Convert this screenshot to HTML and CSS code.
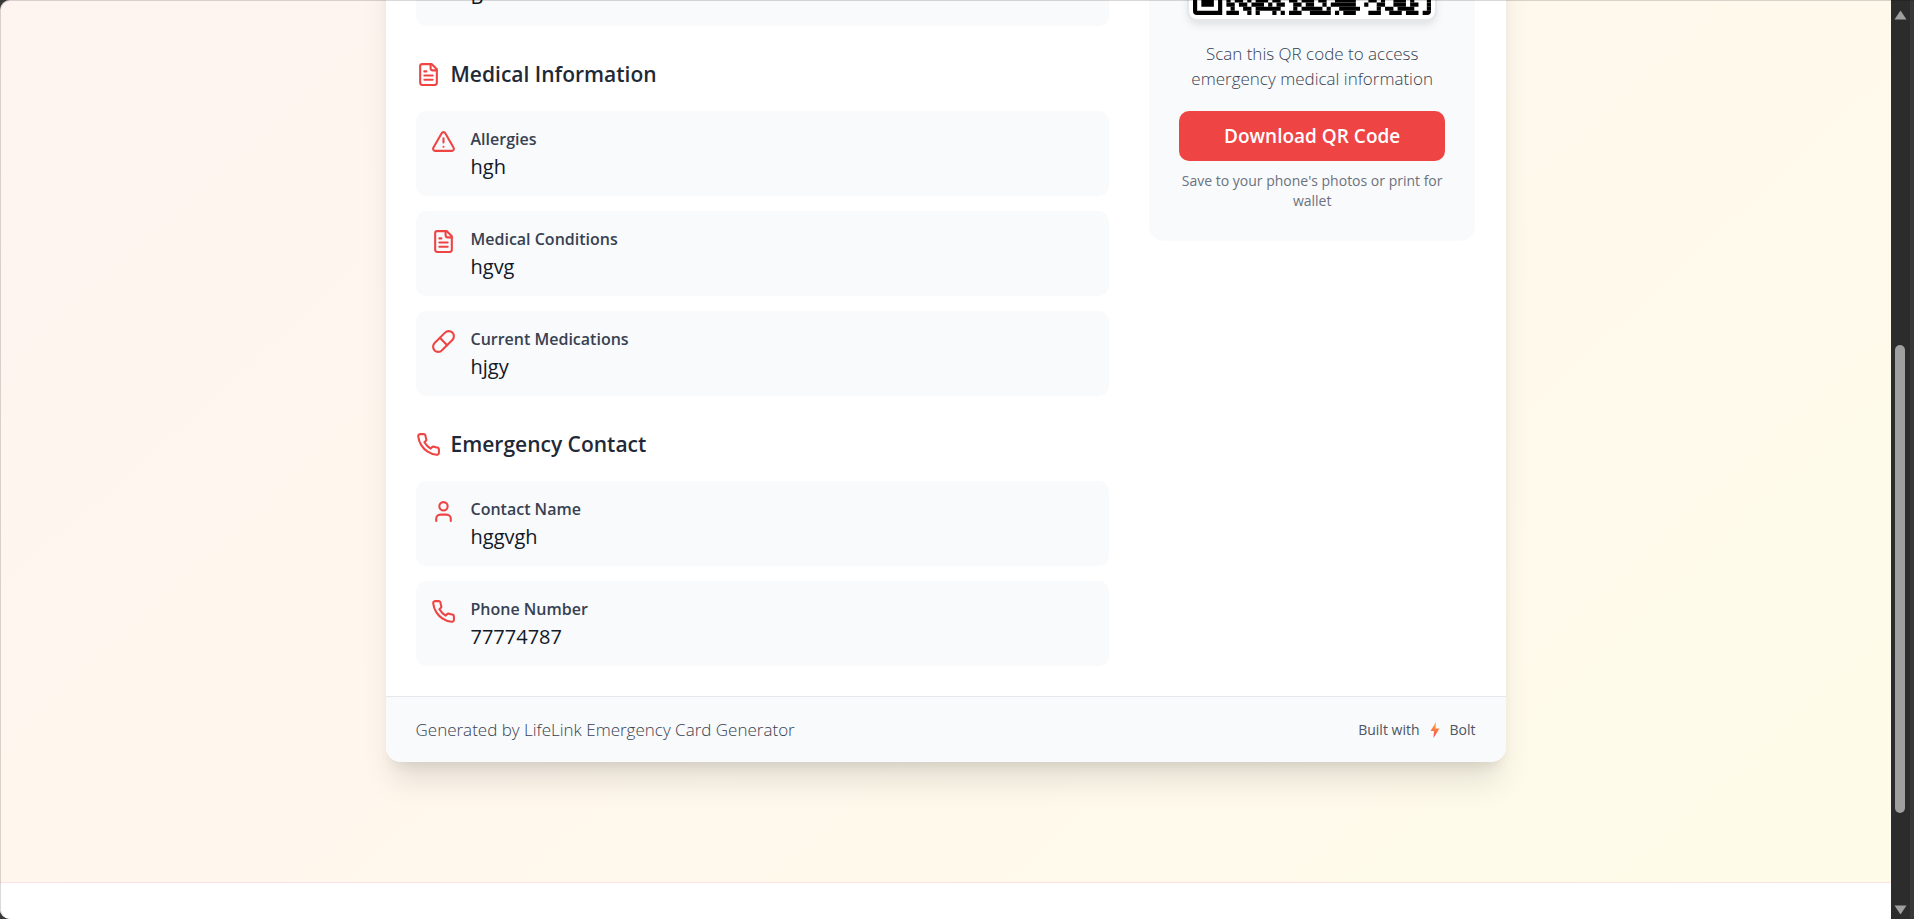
FILE: index.html
```html
<!DOCTYPE html>
<html lang="en">
<head>
    <meta charset="UTF-8">
    <meta name="viewport" content="width=device-width, initial-scale=1.0">
    <title>LifeLink Emergency Card</title>
    <link rel="stylesheet" href="styles.css">
</head>
<body>
    <!-- Shared icons -->
    <svg class="icon-defs" aria-hidden="true">
        <symbol id="icon-file" viewBox="0 0 24 24">
            <path d="M15 2H6a2 2 0 0 0-2 2v16a2 2 0 0 0 2 2h12a2 2 0 0 0 2-2V7Z"/>
            <path d="M14 2v4a2 2 0 0 0 2 2h4"/>
            <path d="M10 9H8"/>
            <path d="M16 13H8"/>
            <path d="M16 17H8"/>
        </symbol>
        <symbol id="icon-alert" viewBox="0 0 24 24">
            <path d="m21.73 18-8-14a2 2 0 0 0-3.48 0l-8 14A2 2 0 0 0 4 21h16a2 2 0 0 0 1.73-3"/>
            <path d="M12 9v4"/>
            <path d="M12 17h.01"/>
        </symbol>
        <symbol id="icon-pill" viewBox="0 0 24 24">
            <path d="m10.5 20.5 10-10a4.95 4.95 0 1 0-7-7l-10 10a4.95 4.95 0 1 0 7 7Z"/>
            <path d="m8.5 8.5 7 7"/>
        </symbol>
        <symbol id="icon-phone" viewBox="0 0 24 24">
            <path d="M22 16.92v3a2 2 0 0 1-2.18 2 19.79 19.79 0 0 1-8.63-3.07 19.5 19.5 0 0 1-6-6 19.79 19.79 0 0 1-3.07-8.67A2 2 0 0 1 4.11 2h3a2 2 0 0 1 2 1.72 12.84 12.84 0 0 0 .7 2.81 2 2 0 0 1-.45 2.11L8.09 9.91a16 16 0 0 0 6 6l1.27-1.27a2 2 0 0 1 2.11-.45 12.84 12.84 0 0 0 2.81.7A2 2 0 0 1 22 16.92z"/>
        </symbol>
        <symbol id="icon-user" viewBox="0 0 24 24">
            <path d="M19 21v-2a4 4 0 0 0-4-4H9a4 4 0 0 0-4 4v2"/>
            <circle cx="12" cy="7" r="4"/>
        </symbol>
    </svg>

    <div class="window">
        <div class="viewport">
            <div class="app">
                <main class="page">
                    <article class="card">
                        <div class="card-body">
                            <div class="details">
                                <section>
                                    <h2><svg class="icon"><use href="#icon-user"/></svg>Personal Information</h2>
                                    <div class="item-list">
                                        <div class="item">
                                            <svg class="icon"><use href="#icon-user"/></svg>
                                            <div>
                                                <h3>Full Name</h3>
                                                <p>hgh</p>
                                            </div>
                                        </div>
                                        <div class="item">
                                            <svg class="icon"><use href="#icon-file"/></svg>
                                            <div>
                                                <h3>Age</h3>
                                                <p>77</p>
                                            </div>
                                        </div>
                                        <div class="item">
                                            <svg class="icon"><use href="#icon-file"/></svg>
                                            <div>
                                                <h3>Blood Type</h3>
                                                <p>B-</p>
                                            </div>
                                        </div>
                                    </div>
                                </section>

                                <section>
                                    <h2><svg class="icon"><use href="#icon-file"/></svg>Medical Information</h2>
                                    <div class="item-list">
                                        <div class="item">
                                            <svg class="icon"><use href="#icon-alert"/></svg>
                                            <div>
                                                <h3>Allergies</h3>
                                                <p>hgh</p>
                                            </div>
                                        </div>
                                        <div class="item">
                                            <svg class="icon"><use href="#icon-file"/></svg>
                                            <div>
                                                <h3>Medical Conditions</h3>
                                                <p>hgvg</p>
                                            </div>
                                        </div>
                                        <div class="item">
                                            <svg class="icon"><use href="#icon-pill"/></svg>
                                            <div>
                                                <h3>Current Medications</h3>
                                                <p>hjgy</p>
                                            </div>
                                        </div>
                                    </div>
                                </section>

                                <section>
                                    <h2><svg class="icon"><use href="#icon-phone"/></svg>Emergency Contact</h2>
                                    <div class="item-list">
                                        <div class="item">
                                            <svg class="icon"><use href="#icon-user"/></svg>
                                            <div>
                                                <h3>Contact Name</h3>
                                                <p>hggvgh</p>
                                            </div>
                                        </div>
                                        <div class="item">
                                            <svg class="icon"><use href="#icon-phone"/></svg>
                                            <div>
                                                <h3>Phone Number</h3>
                                                <p>77774787</p>
                                            </div>
                                        </div>
                                    </div>
                                </section>
                            </div>

                            <aside class="qr-panel">
                                <h2>QR Code</h2>
                                <svg class="qr" viewBox="0 0 57 57" role="img" aria-label="QR code">
                                    <path d="M0 0h7v7h-7zM1 1v5h5v-5zM2 2h3v3h-3zM50 0h7v7h-7zM51 1v5h5v-5zM52 2h3v3h-3z" fill-rule="evenodd"/>
                                    <path d="M0 50h7v7h-7zM1 51v5h5v-5zM2 52h3v3h-3z" fill-rule="evenodd"/>
                                    <path d="M8 53h1v1h-1zM10 53h2v1h-2zM13 53h1v1h-1zM15 53h3v1h-3zM19 53h2v1h-2zM23 53h2v1h-2zM26 53h3v1h-3zM30 53h2v1h-2zM34 53h5v1h-5zM42 53h2v1h-2zM45 53h1v1h-1zM48 53h3v1h-3zM52 53h1v1h-1zM56 53h1v1h-1z"/>
                                    <path d="M8 54h2v1h-2zM11 54h2v1h-2zM14 54h3v1h-3zM18 54h1v1h-1zM20 54h2v1h-2zM24 54h2v1h-2zM27 54h2v1h-2zM31 54h1v1h-1zM33 54h6v1h-6zM41 54h1v1h-1zM44 54h2v1h-2zM48 54h3v1h-3zM52 54h2v1h-2zM56 54h1v1h-1z"/>
                                    <path d="M9 55h1v1h-1zM12 55h2v1h-2zM15 55h6v1h-6zM24 55h1v1h-1zM26 55h5v1h-5zM32 55h1v1h-1zM35 55h5v1h-5zM44 55h1v1h-1zM46 55h2v1h-2zM49 55h4v1h-4zM56 55h1v1h-1z"/>
                                    <path d="M8 56h3v1h-3zM13 56h1v1h-1zM15 56h1v1h-1zM19 56h1v1h-1zM21 56h1v1h-1zM23 56h3v1h-3zM28 56h5v1h-5zM34 56h1v1h-1zM36 56h3v1h-3zM42 56h3v1h-3zM47 56h3v1h-3zM51 56h3v1h-3zM55 56h2v1h-2z"/>
                                </svg>
                                <p class="qr-text">Scan this QR code to access emergency medical information</p>
                                <button type="button" class="download">Download QR Code</button>
                                <p class="qr-hint">Save to your phone's photos or print for wallet</p>
                            </aside>
                        </div>

                        <footer class="card-footer">
                            <p>Generated by LifeLink Emergency Card Generator</p>
                            <div class="built">
                                <span>Built with</span>
                                <svg class="bolt" viewBox="0 0 20 20">
                                    <defs>
                                        <linearGradient id="boltFill" x1="0" y1="0" x2="0" y2="1">
                                            <stop offset="0" stop-color="#fbb040"/>
                                            <stop offset="1" stop-color="#f8424f"/>
                                        </linearGradient>
                                    </defs>
                                    <path d="M11 2 5.500 11h3.500l-.5 7 6-9.500h-4l.5-6.500z" fill="url(#boltFill)"/>
                                </svg>
                                <span>Bolt</span>
                            </div>
                        </footer>
                    </article>
                </main>
                <footer class="site-footer"></footer>
            </div>
        </div>

        <!-- Scrollbar -->
        <div class="scrollbar" aria-hidden="true">
            <svg class="arrow" viewBox="0 0 13 10"><path d="M6.500 0.500 12.500 9.500H.5z"/></svg>
            <div class="track"><div class="thumb"></div></div>
            <svg class="arrow" viewBox="0 0 13 10"><path d="M.5.5h12l-6 9z"/></svg>
        </div>
    </div>
</body>
</html>
```
FILE: styles.css
```css
* {
    box-sizing: border-box;
}
body {
    margin: 0;
    font-family: "Open Sans", "Noto Sans", sans-serif;
    background-color: #383838;
    color: #111827;
}
h2, h3, p {
    margin: 0;
}
.icon-defs {
    display: none;
}
.window {
    display: flex;
    height: 100vh;
    overflow: hidden;
    position: relative;
    border-radius: 10px 0 0 10px;
}
.window::after {
    content: "";
    position: absolute;
    inset: 0;
    border-top: 1px solid rgba(0, 0, 0, 0.15);
    border-left: 1px solid rgba(0, 0, 0, 0.15);
    border-radius: 10px 0 0 10px;
    pointer-events: none;
}

/* Page is scrolled down to the top edge of the site footer */
.viewport {
    flex: 1;
    display: flex;
    flex-direction: column;
    justify-content: flex-end;
    overflow: hidden;
}
.app {
    flex-shrink: 0;
    margin-bottom: -168px;
    background: linear-gradient(to bottom right, #fef2f2, #fff7ed, #fefce8);
}
.page {
    padding: 300px 40px 120px;
}
.card {
    max-width: 1120px;
    margin: 0 auto;
    background-color: #fff;
    border-radius: 15px;
    overflow: hidden;
    box-shadow: 0 25px 31px -6px rgba(0, 0, 0, 0.1), 0 10px 13px -7px rgba(0, 0, 0, 0.1);
}
.card-body {
    display: grid;
    grid-template-columns: repeat(3, 1fr);
    gap: 40px;
    align-items: start;
    padding: 30px;
}
.details {
    grid-column: span 2;
    display: flex;
    flex-direction: column;
    gap: 30px;
}
h2 {
    display: flex;
    align-items: center;
    gap: 10px;
    margin-bottom: 19px;
    font-size: 21px;
    line-height: 36px;
    font-weight: 600;
    color: #1f2937;
}
.icon {
    width: 25px;
    height: 25px;
    flex-shrink: 0;
    fill: none;
    stroke: #ef4444;
    stroke-width: 2;
    stroke-linecap: round;
    stroke-linejoin: round;
}
.item-list {
    display: flex;
    flex-direction: column;
    gap: 15px;
}
.item {
    display: flex;
    align-items: flex-start;
    gap: 15px;
    padding: 15px;
    background-color: #f9fafb;
    border-radius: 10px;
}
.item .icon {
    margin-top: 3px;
}
.item h3 {
    font-size: 16px;
    line-height: 27px;
    font-weight: 600;
    color: #374151;
}
.item p {
    font-size: 20px;
    line-height: 28px;
}
.qr-panel {
    display: flex;
    flex-direction: column;
    align-items: center;
    padding: 30px;
    background-color: #f9fafb;
    border-radius: 15px;
    text-align: center;
}
.qr {
    width: 250px;
    height: 250px;
    margin-bottom: 20px;
    padding: 4px;
    background-color: #fff;
    border: 2px solid #e5e7eb;
    border-radius: 10px;
    box-shadow: 0 5px 8px -1px rgba(0, 0, 0, 0.1);
}
.qr-text {
    margin-bottom: 20px;
    font-size: 17px;
    line-height: 25px;
    font-weight: 300;
    color: #374151;
}
.download {
    width: 100%;
    margin-bottom: 10px;
    padding: 10px 20px;
    border: none;
    border-radius: 10px;
    background-color: #ef4444;
    color: #fff;
    font-family: inherit;
    font-size: 19px;
    line-height: 30px;
    font-weight: 600;
    cursor: pointer;
}
.download:hover {
    background-color: #dc2626;
}
.qr-hint {
    font-size: 14px;
    line-height: 20px;
    color: #6b7280;
}
.card-footer {
    display: flex;
    justify-content: space-between;
    align-items: center;
    padding: 20px 30px;
    border-top: 1px solid #e5e7eb;
    background-color: #f9fafb;
    font-size: 17px;
    line-height: 25px;
    font-weight: 300;
    color: #374151;
}
.built {
    display: flex;
    align-items: center;
    gap: 5px;
    font-size: 14px;
    font-weight: 400;
    color: #4b5563;
}
.bolt {
    width: 20px;
    height: 20px;
}
.site-footer {
    height: 205px;
    border-top: 1px solid #fee2e2;
    background-color: #fff;
}

.scrollbar {
    width: 23px;
    padding: 10px 4px 4px 3px;
    display: flex;
    flex-direction: column;
    background-color: #2c2c2c;
    border-right: 4px solid #383838;
}
.arrow {
    width: 13px;
    height: 10px;
    fill: #9f9f9f;
}
.track {
    flex: 1;
    padding: 0 1px 92px;
    display: flex;
    flex-direction: column;
    justify-content: flex-end;
}
.thumb {
    height: 59%;
    border-radius: 6px;
    background-color: #9f9f9f;
}
```
